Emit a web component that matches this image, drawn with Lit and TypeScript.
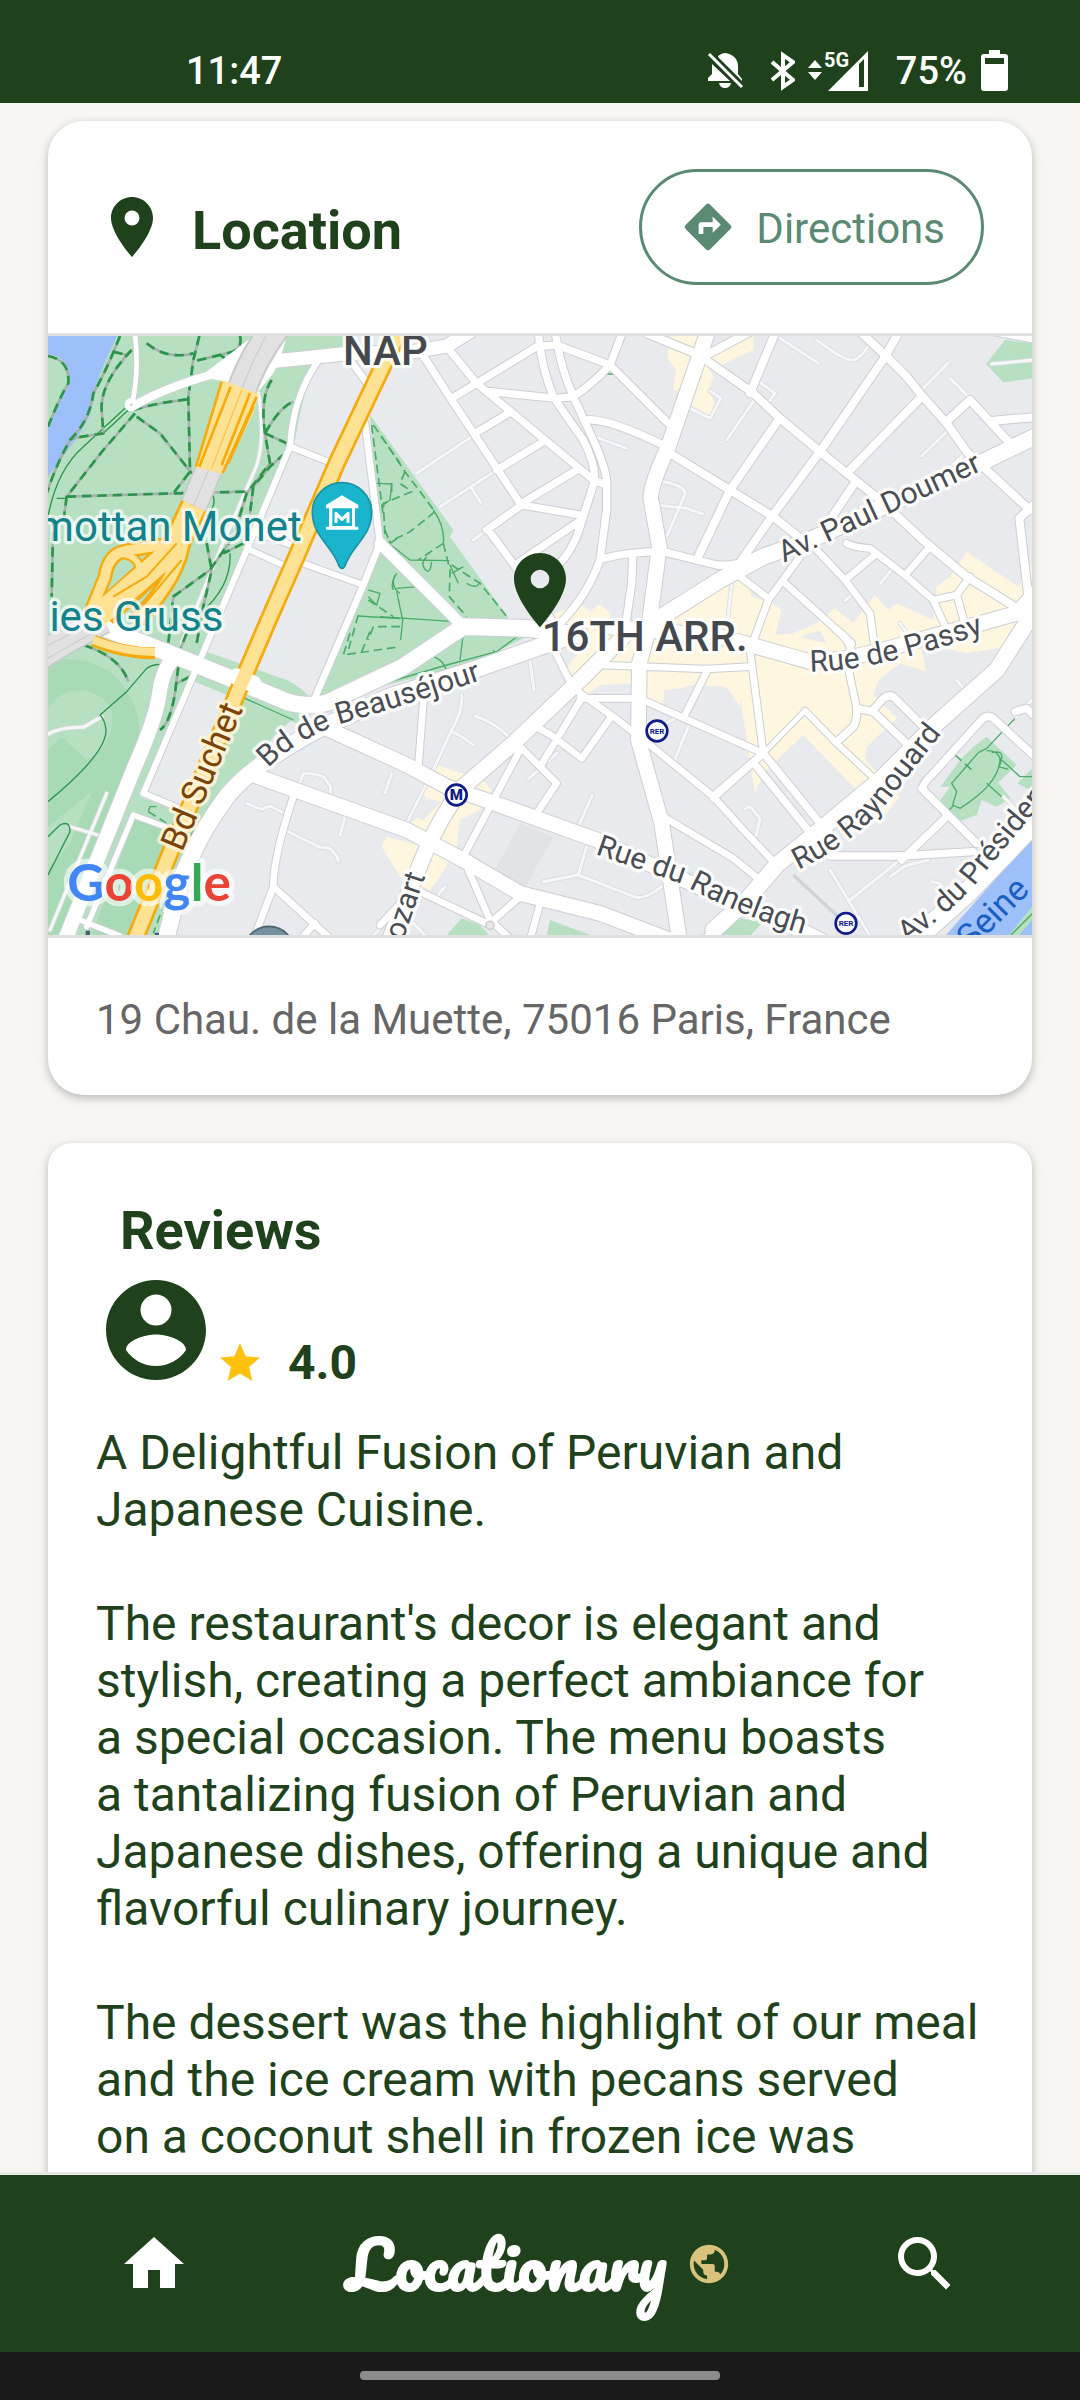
import { LitElement, html, css, svg } from "lit";
import { customElement } from "lit/decorators.js";

/* The map is drawn on a 3 x 2 grid of sheets; each shape names its sheet. */
type Sheet = "A" | "B" | "C" | "D" | "E" | "F";
const ORIGIN: Record<Sheet, string> = {
  A: "translate(-24 -18)",
  B: "translate(996 -18)",
  C: "translate(2016 -18)",
  D: "translate(-24 882)",
  E: "translate(996 882)",
  F: "translate(2016 882)",
};

const AREAS: [Sheet, string, string][] = [
  ["A", "park", "M0 0H930L905 70 810 110 760 350 620 660 440 1100 300 1400 430 1450 590 1070 830 1100 700 1220 420 1640 360 1840H0Z"],
  ["D", "block", "M465 150L580 195 430 530 315 480ZM500 0H940L830 205 760 160 500 60Z"],
  ["D", "parkDark", "M0 95Q120 70 210 125 300 200 300 330L170 640 100 840 60 930H0ZM285 565L400 600 375 680 290 850 260 930H150Z"],
  ["D", "park", "M24 235Q60 180 130 180 220 200 218 275 210 350 140 390L65 320 24 360ZM155 485L90 640 24 720V590Z"],
  ["D", "park", "M500 65L740 150Q800 180 815 215L770 280 610 215 465 155Z"],
  ["B", "park", "M-30 255L220 600 210 620 390 870 430 925 280 1000 0 1070 -200 1110 -110 900 -50 740 0 640Z"],
  ["A", "water", "M0 0H242Q160 150 152 250 120 320 60 390L24 440H0Z"],
  ["A", "park", "M24 75Q85 70 88 160 60 200 45 235L24 290Z"],
  ["B", "shop", "M875 0H965L970 90 900 185 878 180 888 120 862 85ZM975 95L1000 140 985 180 1015 240 990 260 935 225ZM990 80L1120 10V60L1010 112Z"],
  ["B", "shop", "M525 850L600 820 630 845 660 822 690 850 700 940H510Z"],
  ["E", "shop", "M560 110L620 40 770 20 760 160 660 165 620 195 570 150ZM790 30H1080V230L1040 170 940 165 900 175 852 180 850 222 795 205Z"],
  ["C", "shop", "M-60 790L50 730 90 770 95 800 150 815 185 840 165 915 220 910 290 880 345 835 400 880 465 795 505 840 530 820 640 870 650 770 690 740 740 665 895 770 940 700V860L860 950 740 970 600 940 620 1025 540 1000 475 1050 460 1095 530 1165 440 1250 435 1290 540 1400 500 1450 410 1400 410 1380 250 1215 130 1330 105 1390 60 1100 0 1060 -220 900Z"],
  ["C", "block", "M370 925L410 930 385 970ZM240 920L300 900 320 940Z"],
  ["E", "shop", "M120 470L300 440 335 480 300 540 240 570 230 650 180 635 200 540 130 610 80 590 150 530ZM20 620L130 650 205 695 180 740 150 780 60 740 5 650ZM170 405L260 435 250 460 150 430Z"],
  ["E", "block", "M120 500L185 515 130 570 110 560Z"],
  ["E", "plaza", "M420 580L520 620 430 780 340 730Z"],
  ["C", "park", "M855 30L940 40V145L850 157 798 102Z"],
  ["E", "park", "M205 910L245 865 300 885 340 930H200ZM510 870L640 918H500ZM1020 930L1090 860V930Z"],
  ["F", "park", "M0 918L50 865 130 875 90 918ZM800 320L890 405 835 458 872 505 830 530 785 510 770 555 720 573 658 515 690 470 662 470 720 390 760 350ZM892 460L940 412V485Z"],
  ["F", "water", "M665 930L940 618V930Z"],
  ["F", "park", "M855 930L940 825V865L885 930Z"],
];

const LANES: [Sheet, string][] = [
  ["A", "M655 190Q680 350 640 430L540 660 425 940"],
  ["B", "M110 430L275 320M180 530L350 420M275 475L302 518M650 322L740 355M850 455Q930 470 912 500L860 620M830 525L920 535 968 552M930 235L990 265 1022 205 990 183M1055 760L1042 880M280 630L320 600"],
  ["C", "M170 18L295 100M290 30Q375 95 400 90T450 40M110 150L165 190 140 225M20 330L100 215M605 378L680 305M735 370L650 450M480 762L520 712M375 812L400 790M600 185L685 98M690 145L750 205M815 102L940 90M540 880L565 915"],
  ["D", "M20 315Q60 290 130 292L185 260M200 490L30 900M90 590L190 620M620 520L665 538 690 528 735 550M775 470L790 430Q820 428 850 440L872 470 870 495M1055 430L1035 490M915 560L900 615M735 600L840 652 870 655 892 680 895 695M1000 918L1080 820"],
  ["E", "M245 195Q250 240 215 300L155 430 75 590M215 305Q250 320 280 345M285 258Q350 280 390 325M445 447L530 370M450 95L462 180M637 495L590 600M620 650L595 735 490 755M595 735L770 803Q800 805 845 770M925 290L880 400M885 265L850 285M170 800L195 770M100 880L140 920"],
  ["F", "M75 537L90 530 120 565 105 630M330 720L450 918M510 740L555 708 625 690M540 690L390 810M710 150L735 180M635 755L660 760 665 790M885 265L940 205M850 500L900 550"],
];

const ROADS: [Sheet, number, string][] = [
  ["A", 14, "M283 0Q300 120 275 228"],
  ["A", 24, "M285 225Q400 160 570 120"],
  ["A", 18, "M830 100Q760 200 750 350L620 660 480 990 310 1390 430 1440M750 350L865 395M620 655L740 710M775 695L970 765M640 605L770 650"],
  ["A", 20, "M975 280L1020 640 970 765 822 1110M930 90L985 165"],
  ["B", 22, "M125 70L215 210 420 520M200 50L290 160 640 450 680 465M215 205L290 160 470 50 530 45 690 105M475 0Q480 100 520 200 560 260 610 330 655 420 640 465L600 590Q580 660 530 710M525 0Q540 110 580 200L640 330Q680 420 680 460V540L660 690Q620 800 540 880M330 185L530 205 580 200Q640 160 690 105L730 0M690 105L875 290M620 270Q680 262 860 350M285 310L385 250M350 420L490 335M425 520L590 420M425 525L600 555M320 600L425 525M325 600L410 715M405 705L600 572M660 688Q740 665 850 665L1010 705Q1060 710 1120 685M758 680L755 760 735 900M500 850L530 890"],
  ["B", 24, "M800 10L970 80 1130 -5M870 370L1180 560 1280 640M950 690L1050 480 1195 270"],
  ["C", 24, "M-35 95L100 190 180 265 300 365 480 510 620 640 740 740 900 840M165 10L90 190M540 0L495 80 300 365 155 560 55 705M420 5L500 80 560 140 600 190 680 280 740 365 930 540M605 200L380 430M400 465L310 600M685 270L750 210 870 340M820 272L940 262M940 525L898 565 925 800 900 850M800 0L940 25"],
  ["C", 20, "M290 660L375 750 450 850 465 960M190 755L395 940 380 990 410 1135M240 680L145 810 90 960 130 1270M60 740L145 805M375 750L465 675M380 640Q400 652 450 655L560 740 640 810 685 910M560 730L630 650M640 810L710 795 750 740M710 795L740 900"],
  ["D", 16, "M280 555L140 890M280 555L400 600M120 870L240 918"],
  ["D", 20, "M760 500Q700 680 700 770L640 930M700 770L870 925M780 930L825 880"],
  ["E", 20, "M525 65L575 165M660 105L980 117 1110 110M600 205H760M595 185L700 260 810 345 1000 500 1090 600 1190 705M800 215L1150 370M980 125L910 265M605 205L480 410M690 265L605 385 520 320 460 285M425 355L530 460 470 550M420 360L250 680M265 720L330 870 400 935M330 880L420 800M130 790L330 885M480 820L450 930M130 215L115 410M850 560L1060 685 1140 750M1000 505L1150 370M0 885L90 790"],
  ["E", 34, "M970 940L1100 820"],
  ["F", 22, "M130 370L-10 490M130 370L325 610M110 410L280 620M350 335L400 290Q412 270 410 235L460 245 570 350M455 245L490 205Q510 190 525 205L620 300M350 0Q390 30 392 60M680 560L545 690M330 678H540L760 665M885 245L920 235 945 260"],
  ["F", 14, "M130 370L255 242"],
  ["F", 18, "M255 242L350 340 500 480"],
  ["F", 22, "M610 475Q602 465 640 430L780 275Q800 250 820 265L945 380M605 475L770 640"],
  ["B", 34, "M0 640L240 880"],
  ["B", 40, "M-330 95L-110 72 100 65 200 48 270 5"],
  ["D", 50, "M130 -30L400 75 620 165 740 215Q830 240 890 205L1090 110 1270 -10 1460 -5 1620 15"],
  ["D", 44, "M395 90Q365 130 358 190 350 260 280 420L75 930"],
  ["D", 50, "M1570 25L1300 120 1050 200 850 290Q640 400 560 500 470 620 420 760L375 940"],
  ["D", 44, "M860 295L1100 405 1220 470 1350 515 1670 630 2020 790 2260 890 2360 940M640 435L1100 600 1270 690 1440 790 1680 850 1890 930"],
  ["E", 46, "M730 20L600 150 400 340 250 470Q180 560 130 680L90 780 20 950"],
  ["C", 48, "M-230 895L0 750 130 680 270 630 400 570 780 400 940 322"],
  ["B", 44, "M985 0L865 350Q800 490 815 520L838 650 805 900 778 1000 775 1230 845 1480 900 1840"],
  ["F", 44, "M-340 -10L0 20 110 50 270 95Q400 90 560 40L800 -25 890 -50 945 -110"],
  ["F", 48, "M945 -60L900 10 830 120 650 280 480 450 300 600 170 705 80 810 -20 900"],
  ["F", 60, "M560 950L740 790 960 560"],
];

const TRAILS: [Sheet, string][] = [
  ["A", "M240 18Q200 120 160 190 150 270 90 330 50 400 20 490M24 78Q90 90 85 160 60 200 24 290M275 60Q180 160 185 240L190 310 95 325M220 65L260 75 275 60M285 250L190 360 80 500 72 560M290 260L360 310 455 430M478 18L460 90 445 200 450 425 400 490M280 240Q340 220 445 208M80 500L400 490 620 485M320 40Q380 90 460 70M600 18Q610 60 560 70L470 92M540 75L570 95M695 150Q660 200 675 310L690 400 620 490 580 620 510 720 400 800 385 940M675 310Q720 230 760 215M675 310L740 340M735 370L690 410 640 470 630 550M610 640L550 670M500 640L515 720 490 830 470 940M40 560L35 800"],
  ["D", "M130 45Q240 80 265 155M415 110L405 190Q390 280 360 300M450 140L410 160M440 10L420 60"],
];

const PATHS: [Sheet, string][] = [
  ["A", "M255 235L130 350Q50 420 24 560M265 240L190 310M50 505H80M515 490Q535 520 500 560M570 670Q575 770 480 850M160 910L250 925"],
  ["D", "M24 515Q200 370 198 300 195 270 180 255L260 185 320 115Q350 95 385 110M24 735L90 605Q90 570 60 585L24 620"],
];

const FINE: [Sheet, string][] = [
  ["B", "M160 540Q195 590 190 640M20 635L90 690 208 692M0 860L225 875M30 670L115 770 50 775M40 780Q30 760 50 730M50 785L68 870 62 930M140 680Q120 700 135 718T155 695M210 705L235 760M250 710L215 730M260 760Q290 780 300 755M670 132H702M1030 715V730"],
  ["A", "M1010 460L1055 462 1050 510 1030 525M955 858L1080 866M985 780L1020 790 1010 825 985 800M1065 735Q1050 770 1080 790"],
  ["D", "M615 205L760 270M990 170L1090 115M325 545L330 530 350 530"],
  ["E", "M-90 175L0 150 140 75 250 10 240 90M-90 190L200 105 350 65 425 10M135 75Q190 80 200 125M340 60L352 82"],
  ["F", "M885 265L800 355 775 368 695 460 710 485 698 525 720 535Q840 460 840 385 830 360 800 362M815 368Q850 360 845 385T835 410L865 418M840 385L900 440H940M800 460L845 500M685 542L700 527M870 918L940 848"],
];

const FINE_DASH: [Sheet, string][] = [
  ["B", "M5 320L75 425 165 545M75 425L60 460 95 485 10 520 15 620M165 545L90 605 20 640M190 640L115 690M190 640L210 720 208 800 260 860M215 705L300 760 385 865M35 460V500"],
  ["A", "M995 285L1030 560M1000 285L1080 400M1035 600L1050 640 1080 620M955 855L925 960M1080 890H1000L985 930M985 810L1060 860"],
  ["D", "M590 440Q480 560 440 640L340 910M930 10L910 75 1080 50M990 5L965 65M325 545L380 580"],
  ["F", "M705 375L765 428"],
];

const onSheets = (items: [Sheet, string][], cls: string) =>
  items.map(([s, d]) => svg`<path class=${cls} transform=${ORIGIN[s]} d=${d} />`);

@customElement("city-map")
class CityMap extends LitElement {
  static styles = css`
    :host { display: block; }
    svg { display: block; width: 100%; height: auto; font-family: Roboto, "Noto Sans", sans-serif; }
    path { stroke-linejoin: round; }
    .ground, .block { fill: #e9eaee; }
    .plaza { fill: #e2e3e7; }
    .park { fill: #b7e0c3; }
    .parkDark { fill: #a9dab6; }
    .shop { fill: #fef6df; }
    .water { fill: #9dc0fa; }
    .case { fill: none; stroke: #cdced4; stroke-linecap: round; }
    .fill { fill: none; stroke: #fff; stroke-linecap: round; }
    .laneCase { fill: none; stroke: #d9dbdf; stroke-width: 14; stroke-linecap: round; }
    .lane { fill: none; stroke: #f6f7f9; stroke-width: 9; stroke-linecap: round; }
    .trailBase { fill: none; stroke: #a5b2a8; stroke-width: 8; }
    .trail { fill: none; stroke: #2a964c; stroke-width: 8; stroke-dasharray: 28 18; }
    .path { fill: none; stroke: #2a964c; stroke-width: 4; }
    .fine { fill: none; stroke: #4bab68; stroke-width: 4; }
    .fineDash { fill: none; stroke: #4bab68; stroke-width: 5; stroke-dasharray: 26 14; }
    .tunnelEdge { fill: none; stroke: #c9c9c9; }
    .tunnel { fill: none; stroke: #e1e1e1; }
    .hwEdge { fill: none; stroke: #f5ab0d; }
    .hw { fill: none; stroke: #fde293; }
    .hwFill { fill: #fde293; }
    .label { fill: #4a4e53; stroke: #fff; stroke-opacity: .85; stroke-width: 20; stroke-linejoin: round; paint-order: stroke; font-size: 90px; }
    .area { font-size: 126px; font-weight: 500; fill: #45494e; }
    .place { font-size: 126px; fill: #12828c; stroke-opacity: .7; }
    .avenue { fill: #7a4408; font-size: 104px; stroke: #fff6dc; }
    .river { fill: #1a5fc4; stroke: none; font-size: 104px; }
    .brand { font-family: Lato, Roboto, sans-serif; font-weight: 700; font-size: 154px; stroke: #fff; stroke-opacity: .6; stroke-width: 32; stroke-linejoin: round; paint-order: stroke; }
    .g { fill: #4285f4; } .r { fill: #ea4335; } .y { fill: #fbbc05; } .n { fill: #34a853; }
    .metro { fill: #fff; stroke: #111c84; stroke-width: 8; }
    .metroText { fill: #111c84; font-weight: 700; text-anchor: middle; }
    .m { font-size: 45px; font-weight: 900; }
    .rer { font-size: 24px; }
    .end { text-anchor: end; }
    .mid { text-anchor: middle; }
  `;

  render() {
    return html`<svg viewBox="0 0 2952 1797" role="img" aria-label="Map of the 16th arrondissement">
      <defs>
        <path id="beausejour" transform="translate(-24 882)" d="M685 415Q760 335 900 282 1130 215 1330 148" />
        <path id="passy" transform="translate(2016 882)" d="M270 125Q480 125 830 -5" />
        <path id="raynouard" transform="translate(2016 882)" d="M235 720Q400 640 500 520L720 240" />
        <path id="ranelagh" transform="translate(996 882)" d="M645 672L900 760Q1120 880 1340 930" />
        <path id="president" transform="translate(2016 882)" d="M560 940Q720 830 800 720L1040 430" />
      </defs>
      <rect class="ground" width="2952" height="1800" />
      ${AREAS.map(([s, c, d]) => svg`<path class=${c} transform=${ORIGIN[s]} d=${d} />`)}
      ${onSheets(LANES, "laneCase")}${onSheets(LANES, "lane")}
      ${onSheets(FINE, "fine")}${onSheets(FINE_DASH, "fineDash")}${onSheets(PATHS, "path")}
      ${onSheets(TRAILS, "trailBase")}${onSheets(TRAILS, "trail")}
      ${ROADS.map(([s, w, d]) => svg`<path class="case" stroke-width=${w + 6} transform=${ORIGIN[s]} d=${d} />`)}
      ${ROADS.map(([s, w, d]) => svg`<path class="fill" stroke-width=${w} transform=${ORIGIN[s]} d=${d} />`)}
      <g transform=${ORIGIN.A}>
        <circle cx="274" cy="224" r="20" fill="#fff" /><circle cx="274" cy="224" r="4" fill="#cdced4" />
        <path fill="#fff" d="M640 18L480 140 560 155 650 190 700 130 720 90 740 18Z" />
        <path class="tunnelEdge" stroke-width="92" d="M715 -20Q640 80 605 180" />
        <path class="tunnel" stroke-width="80" d="M715 -20Q640 80 605 180" />
        <path class="tunnelEdge" stroke-width="3" d="M700 -20Q640 80 605 180" />
        <path class="tunnelEdge" stroke-width="84" d="M508 415L460 530" />
        <path class="tunnel" stroke-width="74" d="M508 415L460 530" />
        <path class="tunnelEdge" stroke-width="3" d="M508 415L460 530" />
        <path class="hwFill" d="M545 150L655 192 640 250 550 432 465 412Z" />
        <path class="hwEdge" stroke-width="8" d="M545 155L468 410M572 170L478 410M650 200L548 430M630 190L545 405M640 230L565 400" />
        <path class="hwEdge" stroke-width="2" d="M605 180L515 415" />
        <path class="tunnelEdge" stroke-width="86" d="M-20 990L80 930 190 870" />
        <path class="tunnel" stroke-width="76" d="M-20 990L80 930 190 870" />
        <path class="tunnelEdge" stroke-width="3" d="M-20 970L170 870M-20 1010L190 890" />
        <path class="hwEdge" stroke-width="44" d="M400 640L260 662Q205 670 195 740L150 850" />
        <path class="hwEdge" stroke-width="30" d="M245 672Q310 680 295 740L215 820" />
        <path class="hwEdge" stroke-width="84" d="M462 528L400 660 190 850" />
        <path class="hwEdge" stroke-width="52" d="M430 620Q420 740 290 870" />
        <path class="hw" stroke-width="30" d="M400 640L260 662Q205 670 195 740L150 850" />
        <path class="hw" stroke-width="18" d="M245 672Q310 680 295 740L215 820" />
        <path class="hw" stroke-width="68" d="M462 528L400 660 160 870" />
        <path class="hw" stroke-width="36" d="M430 620Q420 740 290 870" />
        <path class="hwEdge" stroke-width="6" d="M410 640L320 740 220 800M425 690L290 850" />
        <path class="hwEdge" stroke-width="36" d="M160 932Q250 970 345 970" />
        <path class="hw" stroke-width="24" d="M160 930Q250 966 345 966" />
        <path class="hwEdge" stroke-width="56" d="M1085 -10L980 210 890 400 765 690 690 860 602 1065 400 1545 280 1840" />
        <path class="fill" stroke-width="50" d="M590 1040L640 1062" />
        <path class="hw" stroke-width="40" d="M1085 -10L980 210 890 400 765 690 690 860 602 1065 400 1545 280 1840" />
        <path fill="#1ab4cc" stroke="#1a93a6" stroke-width="5" d="M906 458A89 89 0 0 0 817 547C817 620 880 650 897 708Q906 722 915 708C932 650 995 620 995 547A89 89 0 0 0 906 458Z" />
        <path fill="#fff" d="M906 496L955 525V535H945V590H955V599H858V590H867V535H858V525ZM877 535V588H936V535Z" />
        <path fill="none" stroke="#fff" stroke-width="9" d="M888 578V550L906 568 924 550V578" />
      </g>
      <g transform=${ORIGIN.F}>
        <path fill="none" stroke="#cfd3d6" stroke-width="10" d="M220 735L365 870" />
      </g>
      <g transform=${ORIGIN.D}>
        <circle cx="687" cy="965" r="76" fill="#75909e" stroke="#486270" stroke-width="5" />
        <path fill="#486270" d="M137 902H150V918H137ZM344 908H357V918H344Z" />
      </g>
      <g transform=${ORIGIN.E}>
        <circle cx="330" cy="886" r="12" fill="#e9eaee" stroke="#cdced4" stroke-width="5" />
        <circle class="metro" cx="229" cy="495" r="31" /><text class="metroText m" x="229" y="511">M</text>
        <circle class="metro" cx="831" cy="303" r="31" /><text class="metroText rer" x="831" y="312">RER</text>
        <circle class="metro" cx="1398" cy="880" r="31" /><text class="metroText rer" x="1398" y="889">RER</text>
      </g>
      <text class="label place end" x="761" y="616">mottan Monet</text>
      <text class="label place end" x="526" y="884">ies Gruss</text>
      <text class="label area mid" x="1012" y="88">NAP</text>
      <text class="label area mid" x="1790" y="946">16TH ARR.</text>
      <text class="label" transform="translate(2208 680) rotate(-25)">Av. Paul Doumer</text>
      <text class="label"><textPath href="#beausejour">Bd de Beauséjour</textPath></text>
      <text class="label"><textPath href="#passy">Rue de Passy</textPath></text>
      <text class="label"><textPath href="#raynouard">Rue Raynouard</textPath></text>
      <text class="label"><textPath href="#ranelagh">Rue du Ranelagh</textPath></text>
      <text class="label"><textPath href="#president">Av. du Présiden</textPath></text>
      <text class="label avenue" transform="translate(402 1550) rotate(-67)">Bd Suchet</text>
      <text class="label end" transform="translate(1132 1620) rotate(-71)">ozart</text>
      <text class="label river" transform="translate(2768 1846) rotate(-45)">Seine</text>
      <text class="brand" x="58" y="1696"><tspan class="g">G</tspan><tspan class="r">o</tspan><tspan class="y">o</tspan><tspan class="g">g</tspan><tspan class="n">l</tspan><tspan class="r">e</tspan></text>
      <g transform=${ORIGIN.B}>
        <path fill="#1f421c" fill-rule="evenodd" d="M480 669C437 669 402 704 402 747 402 806 480 892 480 892S558 806 558 747C558 704 523 669 480 669ZM480 775A28 28 0 1 1 480 719 28 28 0 0 1 480 775Z" />
      </g>
    </svg>`;
  }
}

const PIN = svg`<path d="M12 2C8.13 2 5 5.13 5 9c0 5.25 7 13 7 13s7-7.75 7-13c0-3.87-3.13-7-7-7zm0 9.5a2.5 2.5 0 0 1 0-5 2.5 2.5 0 0 1 0 5z"/>`;
const HOME = svg`<path d="M10 20v-6h4v6h5v-8h3L12 3 2 12h3v8z"/>`;
const SEARCH = svg`<path d="M15.5 14h-.79l-.28-.27A6.471 6.471 0 0 0 16 9.5 6.5 6.5 0 1 0 9.5 16c1.61 0 3.09-.59 4.23-1.57l.27.28v.79l5 4.99L20.49 19l-4.99-5zm-6 0C7.01 14 5 11.99 5 9.5S7.01 5 9.5 5 14 7.01 14 9.5 11.99 14 9.5 14z"/>`;
const GLOBE = svg`<path d="M12 2C6.48 2 2 6.48 2 12s4.48 10 10 10 10-4.48 10-10S17.52 2 12 2zm-1 17.93c-3.95-.49-7-3.85-7-7.93 0-.62.08-1.21.21-1.79L9 15v1c0 1.1.9 2 2 2v1.93zm6.9-2.54c-.26-.81-1-1.39-1.9-1.39h-1v-3c0-.55-.45-1-1-1H8v-2h2c.55 0 1-.45 1-1V7h2c1.1 0 2-.9 2-2v-.41c2.93 1.19 5 4.06 5 7.41 0 2.08-.8 3.97-2.1 5.39z"/>`;
const DIRECTIONS = svg`<path d="M21.71 11.29l-9-9a.996.996 0 0 0-1.41 0l-9 9a.996.996 0 0 0 0 1.41l9 9c.39.39 1.02.39 1.41 0l9-9a.996.996 0 0 0 0-1.41zM14 14.5V12h-4v3H8v-4c0-.55.45-1 1-1h5V7.5l3.5 3.5-3.5 3.5z"/>`;
const ACCOUNT = svg`<path d="M12 2C6.48 2 2 6.48 2 12s4.48 10 10 10 10-4.48 10-10S17.52 2 12 2zm0 2.9a3.1 3.1 0 0 1 0 6.2 3.1 3.1 0 0 1 0-6.2zm0 14.3c-2.5 0-4.71-1.28-6-3.22.03-1.99 4-3.08 6-3.08 1.99 0 5.97 1.09 6 3.08a7.2 7.2 0 0 1-6 3.22z"/>`;
const STAR = svg`<path d="M12 17.27L18.18 21l-1.64-7.03L22 9.24l-7.19-.61L12 2 9.19 8.63 2 9.24l5.46 4.73L5.82 21z"/>`;

const REVIEW = `A Delightful Fusion of Peruvian and Japanese Cuisine.

The restaurant's decor is elegant and stylish, creating a perfect ambiance for a\u00a0special occasion. The menu boasts a\u00a0tantalizing fusion of Peruvian and Japanese dishes, offering a unique and flavorful culinary journey.

The dessert was the highlight of our meal and the ice cream with pecans served on\u00a0a coconut shell in frozen ice was`;

@customElement("app-root")
class AppRoot extends LitElement {
  static styles = css`
    :host { display: flex; flex-direction: column; height: 100vh; background: #f7f6f2; color: #1f421c; font-family: Roboto, "Noto Sans", sans-serif; }
    * { box-sizing: border-box; }
    svg { display: block; flex: none; fill: currentColor; }
    h2, p { margin: 0; }
    .status { flex: none; display: flex; align-items: center; justify-content: space-between; height: 103px; padding: 38px 72px 0 186px; background: #1f421c; color: #fff; font-size: 38px; line-height: 44px; font-weight: 500; }
    .tray { display: flex; align-items: center; }
    .bell { margin-right: 27px; }
    .bt { margin-right: 13px; }
    .signal { margin-right: 28px; }
    .net { font-size: 20px; font-weight: 700; }
    .battery { margin-left: 14px; }
    main { flex: 1; min-height: 0; overflow: auto; scrollbar-width: none; display: flex; flex-direction: column; gap: 48px; padding: 18px 48px 0; }
    .card { flex: none; background: #fff; box-shadow: 0 3px 10px rgba(0, 0, 0, .26); }
    .place { border-radius: 36px; }
    .reviews { border-radius: 24px; padding: 56px 48px 96px; }
    .head { display: flex; align-items: center; height: 212px; padding: 0 48px; }
    .title { font-size: 54px; line-height: 64px; font-weight: 700; }
    .head .title { flex: 1; padding: 8px 0 0 24px; }
    .reviews .title { padding-left: 24px; }
    .directions { display: flex; align-items: center; gap: 20px; height: 116px; padding: 0 36px 0 38px; border: 3px solid #5b8a72; border-radius: 58px; background: none; color: #5b8a72; font: 400 42px/50px Roboto, "Noto Sans", sans-serif; }
    .directions span { padding-top: 4px; }
    .map { border: solid #e0e0e0; border-width: 3px 0; }
    .address { padding: 57px 48px 50px; color: #666; font-size: 42px; line-height: 50px; }
    .author { display: flex; align-items: flex-end; height: 120px; margin-top: 7px; }
    .star { color: #ffc10e; margin-bottom: 3px; }
    .score { padding-left: 24px; font-size: 48px; line-height: 54px; font-weight: 700; }
    .body { padding-top: 34px; font-size: 48px; line-height: 57px; white-space: pre-line; }
    nav { flex: none; display: flex; align-items: center; justify-content: space-between; height: 180px; padding: 0 119px 0 118px; border-top: 3px solid #e6e9e6; background: #1f421c; color: #fff; }
    nav a { color: inherit; text-decoration: none; }
    .logo { display: flex; align-items: center; gap: 20px; }
    .name { font: 700 64px/80px Pacifico, cursive; }
    .globe { color: #dac27c; }
    .gesture { flex: none; display: flex; align-items: center; justify-content: center; height: 48px; padding-bottom: 2px; background: #1a1a1a; }
    .handle { width: 33.333%; height: 9px; border-radius: 4px; background: #8c8c8c; }
  `;

  render() {
    return html`
      <header class="status">
        <span>11:47</span>
        <div class="tray">
          <svg class="bell" width="36" height="40" viewBox="0 0 36 40" aria-hidden="true">
            <path d="M11 5Q15 2 18 2C26 3 31 8 31 15V23L35 28V30L11 6ZM5 13L23 30H1V27L5 23ZM12 32H24Q23 37 18 37T12 32Z" />
            <path d="M2 3L35 36" stroke="#fff" stroke-width="3" />
          </svg>
          <svg class="bt" width="25" height="40" viewBox="0 0 25 40" aria-hidden="true">
            <path d="M2 11L23 29 13 36V4L23 11 2 29" fill="none" stroke="#fff" stroke-width="4" />
          </svg>
          <svg class="signal" width="60" height="42" viewBox="0 0 60 42" aria-hidden="true">
            <path d="M0 18L7 10 14 18ZM0 22H14L7 30Z" />
            <path fill-rule="evenodd" d="M60 1V41H20ZM51 14V37H56V9Z" />
            <text class="net" x="16" y="17">5G</text>
          </svg>
          <span>75%</span>
          <svg class="battery" width="27" height="42" viewBox="0 0 27 42" aria-hidden="true">
            <path fill-rule="evenodd" d="M8 0H19V4H24Q27 4 27 7V38Q27 41 24 41H3Q0 41 0 38V7Q0 4 3 4H8ZM4 8V14H23V8Z" />
          </svg>
        </div>
      </header>
      <main>
        <section class="card place">
          <div class="head">
            <svg width="72" height="72" viewBox="0 0 24 24" aria-hidden="true">${PIN}</svg>
            <h2 class="title">Location</h2>
            <button class="directions" type="button">
              <svg width="56" height="56" viewBox="0 0 24 24" aria-hidden="true">${DIRECTIONS}</svg><span>Directions</span>
            </button>
          </div>
          <div class="map"><city-map></city-map></div>
          <p class="address">19 Chau. de la Muette, 75016 Paris, France</p>
        </section>
        <section class="card reviews">
          <h2 class="title">Reviews</h2>
          <div class="author">
            <svg width="120" height="120" viewBox="0 0 24 24" aria-hidden="true">${ACCOUNT}</svg>
            <svg class="star" width="48" height="48" viewBox="0 0 24 24" aria-hidden="true">${STAR}</svg>
            <span class="score">4.0</span>
          </div>
          <p class="body">${REVIEW}</p>
        </section>
      </main>
      <nav>
        <a href="#home" aria-label="Home"><svg width="72" height="72" viewBox="0 0 24 24">${HOME}</svg></a>
        <a class="logo" href="#about"><span class="name">Locationary</span>
          <svg class="globe" width="46" height="46" viewBox="0 0 24 24" aria-hidden="true">${GLOBE}</svg></a>
        <a href="#search" aria-label="Search"><svg width="72" height="72" viewBox="0 0 24 24">${SEARCH}</svg></a>
      </nav>
      <div class="gesture"><div class="handle"></div></div>
    `;
  }
}
